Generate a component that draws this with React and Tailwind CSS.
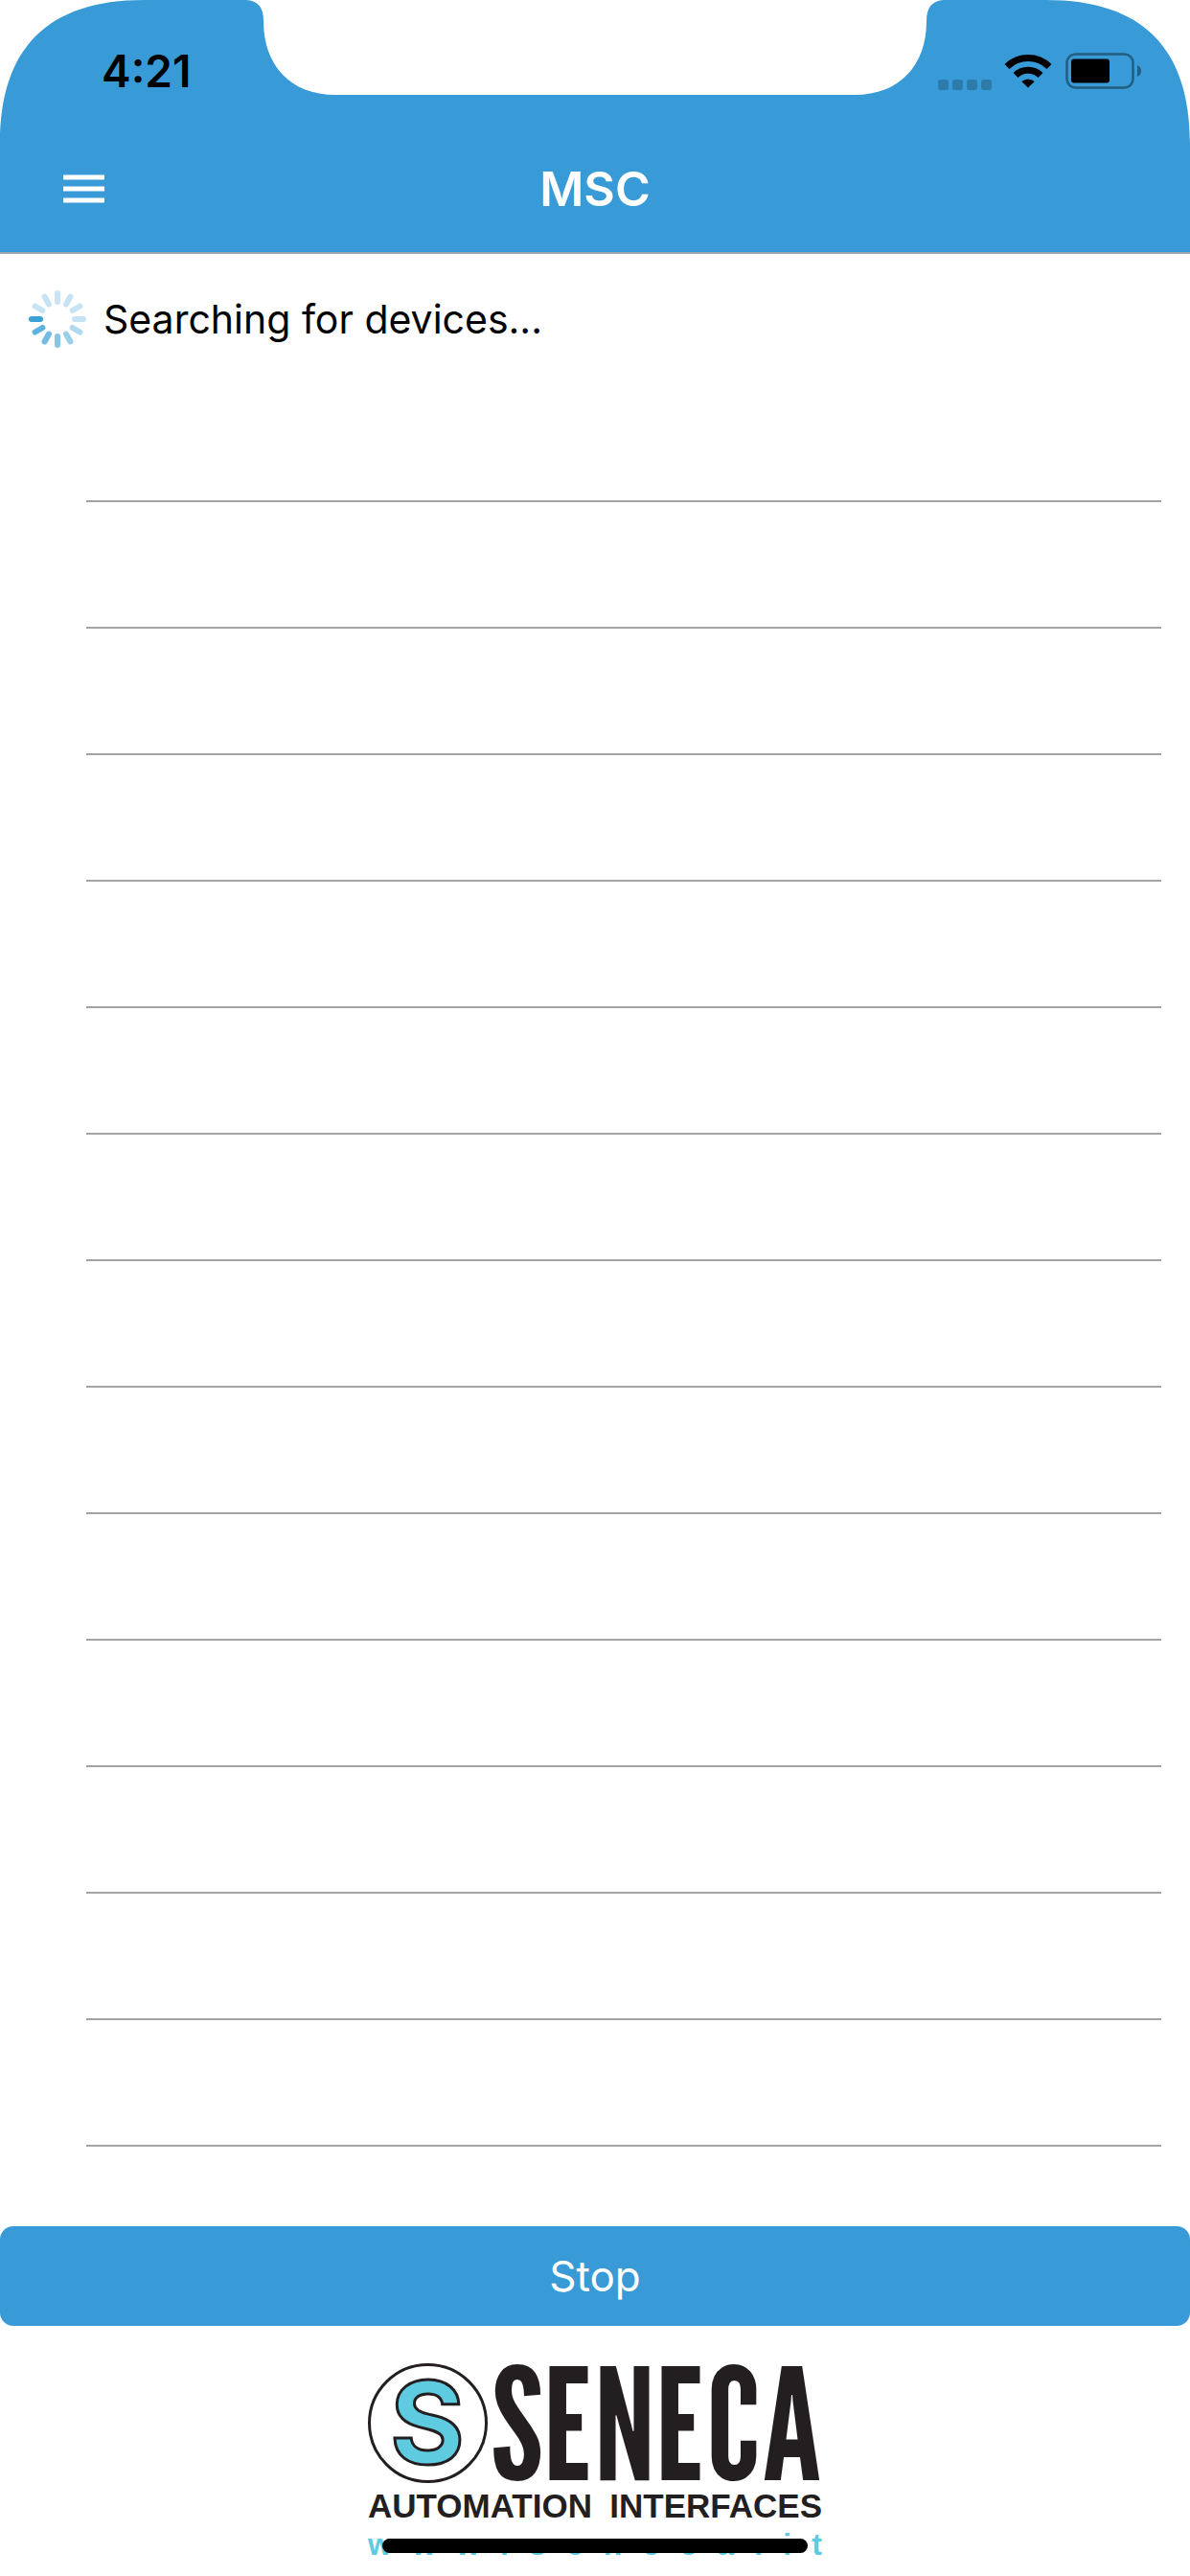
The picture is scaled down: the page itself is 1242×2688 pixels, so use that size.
const rows = Array.from({ length: 14 }, (_, i) => i);
const spokes = [0.27, 0.27, 0.27, 0.28, 0.38, 0.48, 0.58, 0.68, 0.78, 0.95, 0.27, 0.27];

function StatusIcons() {
  return (
    <div className="flex items-center">
      <svg className="mt-7 h-[11px] w-[57px]" viewBox="0 0 57 11" aria-label="No signal">
        {[0, 15, 30, 45].map((x) => (
          <rect key={x} x={x} y="0" width="11" height="11" rx="3" fill="#2c7bab" />
        ))}
      </svg>
      <svg className="ml-3 h-[36px] w-[50px]" viewBox="0 0 50 36" aria-label="Wi-Fi">
        <path d="M3 13.5A31.5 31.5 0 0 1 47 13.5" fill="none" stroke="#000" strokeWidth="7" />
        <path d="M12 22.5A18.5 18.5 0 0 1 38 22.5" fill="none" stroke="#000" strokeWidth="7" />
        <path d="M25 35.5L18.3 29Q25 24 31.7 29Z" fill="#000" />
      </svg>
      <svg className="ml-3.5 h-[38px] w-[80px]" viewBox="0 0 80 38" aria-label="Battery">
        <rect x="1.5" y="1.5" width="69" height="35" rx="9" fill="none" stroke="#225d82" strokeWidth="2.5" />
        <rect x="6" y="6.5" width="40" height="25" rx="3" fill="#000" />
        <path d="M75 13Q79 15 79 19T75 25Z" fill="#225d82" />
      </svg>
    </div>
  );
}

function Header() {
  return (
    <header className="relative flex h-[265px] flex-col border-b-2 border-[#9aa9b5] bg-[#389bd7]">
      <svg className="absolute left-0 top-0 h-[150px] w-[150px]" viewBox="0 0 150 150" aria-hidden="true">
        <path d="M0 0H150C50 0 0 50 0 150Z" fill="#fff" />
      </svg>
      <svg className="absolute right-0 top-0 h-[150px] w-[150px]" viewBox="0 0 150 150" aria-hidden="true">
        <path d="M150 0H0C100 0 150 50 150 150Z" fill="#fff" />
      </svg>
      <svg className="absolute left-1/2 top-0 h-[99px] w-[728px] -translate-x-1/2" viewBox="0 0 728 99" aria-hidden="true">
        <path d="M0 0C12 1 18 7 18 22C18 68 46 99 93 99H635C682 99 710 68 710 22C710 7 716 1 728 0Z" fill="#fff" />
      </svg>
      <div className="flex h-[148px] items-center justify-between pl-[106px] pr-[50px]">
        <time className="text-[46px] font-semibold leading-[56px] text-black">4:21</time>
        <StatusIcons />
      </div>
      <div className="grid flex-1 grid-cols-[1fr_auto_1fr] items-center px-[66px] pb-[18px]">
        <button type="button" aria-label="Menu" className="w-[43px]">
          <svg className="h-[30px] w-[43px]" viewBox="0 0 43 30" aria-hidden="true">
            <path d="M0 3H43M0 15H43M0 27H43" stroke="#fff" strokeWidth="5" />
          </svg>
        </button>
        <h1 className="text-[50px] font-semibold leading-[60px] text-white">MSC</h1>
      </div>
    </header>
  );
}

function Spinner() {
  return (
    <svg className="h-[60px] w-[60px]" viewBox="-30 -30 60 60" aria-hidden="true">
      {spokes.map((o, i) => (
        <path key={i} d="M0 -18V-27" stroke="#2f9cd6" strokeOpacity={o} strokeWidth="6" strokeLinecap="round" transform={`rotate(${i * 30})`} />
      ))}
    </svg>
  );
}

function Logo() {
  return (
    <div className="flex w-[474px] flex-col">
      <div className="flex h-[125px] items-center justify-between">
        <svg className="h-[125px] w-[125px]" viewBox="0 0 125 125" aria-label="S">
          <circle cx="62.5" cy="62.5" r="61" fill="#fff" stroke="#231f20" strokeWidth="3" />
          <text x="62" y="105" textAnchor="middle" fontSize="119" fontWeight="700" fontFamily="Inter, sans-serif" fill="#5ecbe1" stroke="#231f20" strokeWidth="3">S</text>
        </svg>
        <span className="font-['League_Gothic','Oswald','Roboto_Condensed',sans-serif] text-[162px] font-normal leading-[125px] text-[#231f20]">SENECA</span>
      </div>
      <div className="mt-1.5 flex justify-between font-['Liberation_Sans',Arial,sans-serif] text-[35px] font-bold leading-[36px] text-[#231f20]">
        <span>AUTOMATION</span>
        <span>INTERFACES</span>
      </div>
      <a href="#seneca" aria-label="www.seneca.it" className="mt-1 flex justify-between font-['Liberation_Sans',Arial,sans-serif] text-[32px] font-bold leading-[36px] text-[#5ecbe1]">
        {[...'www.seneca.it'].map((c, i) => <span key={i}>{c}</span>)}
      </a>
    </div>
  );
}

export default function App() {
  return (
    <div className="relative flex min-h-screen flex-col bg-white font-[Inter,sans-serif]">
      <Header />
      <main className="flex flex-1 flex-col">
        <div className="flex h-[127px] items-center gap-[18px] px-[30px] pt-2" role="status">
          <Spinner />
          <p className="text-[41px] leading-[50px] text-black">Searching for devices...</p>
        </div>
        <ul className="ml-[90px] mr-[30px]">
          {rows.map((i) => (
            <li key={i} className="h-[132px] border-b-2 border-[#a3a3a3]" />
          ))}
        </ul>
        <button type="button" className="mt-auto h-[104px] w-full rounded-[14px] bg-[#389bd7] text-[44px] leading-[52px] text-white">Stop</button>
      </main>
      <footer className="flex h-[261px] justify-center pt-[39px]">
        <Logo />
      </footer>
      <div className="absolute bottom-6 left-1/2 h-[15px] w-[444px] -translate-x-1/2 rounded-full bg-black" />
    </div>
  );
}
